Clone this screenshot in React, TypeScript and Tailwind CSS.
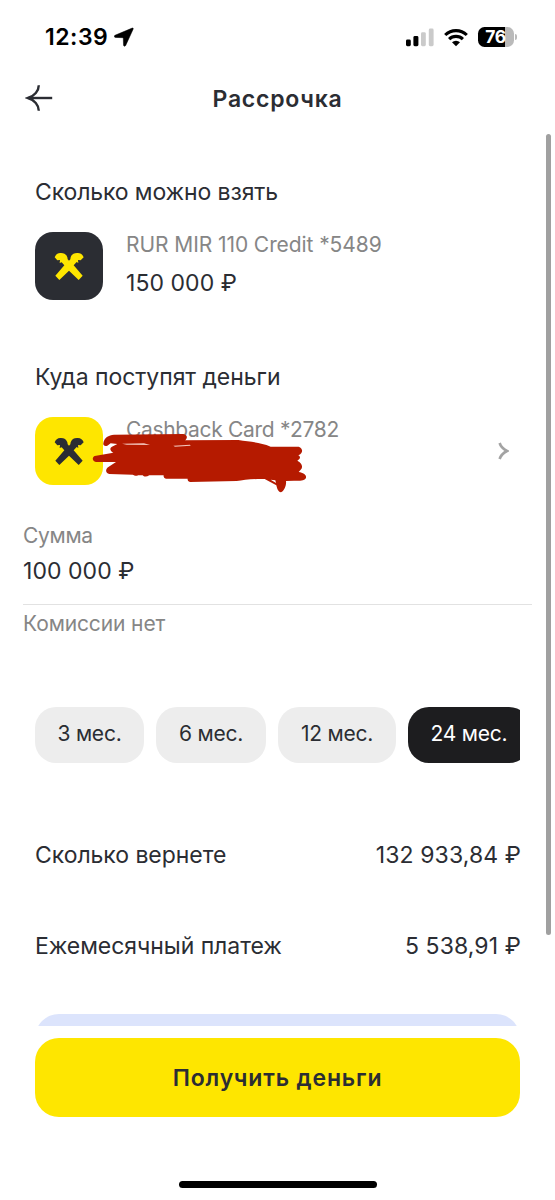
import { useState } from "react";
import clsx from "clsx";

const TERMS = [
  { months: 3, width: "w-[109px]" },
  { months: 6, width: "w-[110px]" },
  { months: 12, width: "w-[118px]" },
  { months: 24, width: "w-[122px]" },
];

function StatusBar() {
  return (
    <div className="flex h-[74px] shrink-0 items-center pl-[45px] pr-[38px] text-black">
      <span className="text-[23px] font-semibold leading-7 tracking-[0.5px]">
        12:39
      </span>
      <svg className="ml-[6px]" width="20" height="20" viewBox="0 0 20 20">
        <path
          d="M18.2 1.100 1 8.300c-1.100.5-.9 2 .3 2.100l7.300.3c.5 0 .7.2.7.7l.2 6.500c.1 1.400 1.600 1.700 2.200.5L19.200 2c.3-.7-.3-1.200-1-.9Z"
          fill="currentColor"
          stroke="currentColor"
          strokeWidth="0.5"
        />
      </svg>
      <div className="ml-auto flex items-center">
        <svg width="28" height="19" viewBox="0 0 28 19">
          <rect x="0" y="11.5" width="4.8" height="6.7" rx="1.4" />
          <rect x="7.4" y="8" width="5" height="10.2" rx="1.4" />
          <rect x="15" y="4.2" width="4.8" height="14" rx="1.4" fill="#cacaca" />
          <rect x="22.8" y="0.5" width="4.8" height="17.7" rx="1.4" fill="#cacaca" />
        </svg>
        <svg className="ml-[10px]" width="24" height="19" viewBox="0 0 24 19">
          <g fill="none" stroke="currentColor" strokeWidth="3.1">
            <path d="M1.2 7a15.4 15.4 0 0 1 21.6 0" />
            <path d="M5.1 11.2a9.8 9.8 0 0 1 13.8 0" />
          </g>
          <path d="M12 18.3 8 14.3a5.7 5.7 0 0 1 8 0Z" fill="currentColor" />
        </svg>
        <div className="ml-[10px] flex h-[20px] w-[36px] items-center justify-center rounded-[6.5px] bg-[linear-gradient(to_right,#000_27px,#bababa_27px)] text-[17.5px] font-bold leading-5 tracking-[-0.4px] text-white">
          76
        </div>
        <div className="ml-[1.5px] h-[6px] w-[2px] rounded-r-full bg-[#bababa]" />
      </div>
    </div>
  );
}

function Header() {
  return (
    <header className="grid h-[49px] shrink-0 grid-cols-[1fr_auto_1fr] items-center px-[25px]">
      <button aria-label="Назад" className="w-[28px] pb-[1px]">
        <svg width="28" height="28" viewBox="0 0 28 28" fill="none" stroke="#2b2d33" strokeWidth="2.4">
          <path d="M27.200 14H3.500" />
          <path d="M13.800 1.300c0 5.500-4.400 10.700-10.800 12.700 6.400 2 10.800 7.200 10.800 12.700" />
        </svg>
      </button>
      <h1 className="text-[23px] font-semibold leading-7 tracking-[0.75px]">
        Рассрочка
      </h1>
    </header>
  );
}

function CardLogo({ dark }: { dark?: boolean }) {
  return (
    <div
      className={clsx(
        "size-[68px] shrink-0 rounded-[18px]",
        dark ? "bg-[#2b2d33] text-[#fee600]" : "bg-[#fee600] text-[#2b2d33]"
      )}
    >
      <svg width="68" height="68" viewBox="15 21 204 204">
        <path
          d="M74 97C77 88 84 83 93 84C103 84 109 88 112 97L113 103L117 107L121 103L122 97C125 88 131 84 141 84C151 83 158 88 161 97L152 106L144 105L145 114L140 111L131 121L158 152L146 165L117 137L88 165L76 152L103 121L95 112L89 114L90 105L82 106Z"
          fill="currentColor"
        />
      </svg>
    </div>
  );
}

function Scribble() {
  return (
    <svg
      className="absolute left-[57px] top-[15px]"
      width="216"
      height="62"
      viewBox="216 216 648 186"
      fill="#b51a00"
    >
      <path d="M250 250C252 233 266 225 282 224L490 222C502 224 504 234 495 241L655 240C690 246 720 246 752 260L836 260C850 265 850 280 835 286C842 290 842 296 832 302C846 308 850 322 842 329L836 336C850 338 860 345 858 353C856 361 840 363 822 362L798 363C800 375 792 395 783 397C773 396 770 380 769 376L734 357C700 356 670 360 650 363L510 366C504 365 502 360 503 356L438 356C432 355 430 350 431 346L388 346C380 351 372 351 368 346L354 346C348 350 342 345 338 344L268 342C257 340 255 329 264 322L288 306L228 306C217 303 215 293 224 288L280 278C270 274 268 264 276 260L292 252L272 250L262 257C254 260 249 256 250 250Z" />
      <path d="M306 251 372 250 390 255 320 254ZM460 257 510 254 512 257 465 260Z" fill="#f3c5bb" />
      <path d="M752 359 766 361 768 369Z" fill="#fff" />
    </svg>
  );
}

function CardRow({
  name,
  amount,
  dark,
}: {
  name: string;
  amount?: string;
  dark?: boolean;
}) {
  return (
    <div className="relative mt-[26px] flex h-[68px]">
      <CardLogo dark={dark} />
      <div className="ml-[23px] flex flex-1 flex-col gap-[12px]">
        <span
          className={clsx(
            "text-[21px] leading-[25px] text-[#868686]",
            dark ? "tracking-[-0.08px]" : "tracking-[-0.32px]"
          )}
        >
          {name}
        </span>
        {amount && (
          <span className="text-[23px] leading-7 tracking-[0.05px]">{amount}</span>
        )}
      </div>
      {!amount && (
        <>
          <Scribble />
          <svg
            className="mr-[11px] self-center"
            width="11"
            height="20"
            viewBox="0 0 11 20"
            fill="none"
            stroke="#a3a3a3"
            strokeWidth="2.6"
          >
            <path d="M1.600 2C2.700 5.600 5.200 8 9 10C5.200 12 2.700 14.400 1.600 18" />
          </svg>
        </>
      )}
    </div>
  );
}

function SummaryRow({ label, value }: { label: string; value: string }) {
  return (
    <div className="flex justify-between text-[23px] leading-7">
      <span className="tracking-[-0.05px]">{label}</span>
      <span className="-mr-px tracking-[0.1px]">{value}</span>
    </div>
  );
}

export default function App() {
  const [term, setTerm] = useState(24);

  return (
    <div className="relative flex h-[1200px] w-[555px] flex-col overflow-hidden bg-white font-['Inter','Liberation_Sans',sans-serif] text-[#2b2d33]">
      <StatusBar />
      <Header />

      <main className="h-[903px] shrink-0 overflow-hidden px-[35px] pt-[55px]">
        <section>
          <h2 className="text-[23px] leading-7 tracking-[-0.12px]">
            Сколько можно взять
          </h2>
          <CardRow name="RUR MIR 110 Credit *5489" amount="150 000 ₽" dark />
        </section>

        <section className="mt-[63px]">
          <h2 className="text-[23px] leading-7 tracking-[-0.05px]">
            Куда поступят деньги
          </h2>
          <CardRow name="Cashback Card *2782" />
        </section>

        <section className="-ml-[12px] -mr-[12px] mt-[38px] flex flex-col">
          <span className="text-[21px] leading-[25px] tracking-[-0.3px] text-[#868686]">
            Сумма
          </span>
          <span className="mt-[9px] border-b border-[#e2e2e2] pb-[19px] text-[23px] leading-7 tracking-[0.05px]">
            100 000 ₽
          </span>
          <span className="mt-[6px] text-[21px] leading-[25px] tracking-[-0.12px] text-[#868686]">
            Комиссии нет
          </span>
        </section>

        <div className="mt-[71px] flex gap-[12px] overflow-hidden">
          {TERMS.map(({ months, width }) => (
            <button
              key={months}
              onClick={() => setTerm(months)}
              className={clsx(
                "h-[56px] shrink-0 rounded-[21px] pb-[3px] text-[21px] leading-[25px] tracking-[-0.22px]",
                width,
                term === months ? "bg-[#1d1d1f] text-white" : "bg-[#ededed]"
              )}
            >
              {months} мес.
            </button>
          ))}
        </div>

        <div className="mt-[78px] flex flex-col gap-[63px]">
          <SummaryRow label="Сколько вернете" value="132 933,84 ₽" />
          <SummaryRow label="Ежемесячный платеж" value="5 538,91 ₽" />
        </div>

        <div className="mt-[54px] h-[80px] rounded-[24px] bg-[#dce4fc]" />
      </main>

      <footer className="flex flex-col items-center px-[35px] pt-[12px]">
        <button className="h-[79px] w-full rounded-[24px] bg-[#fee600] text-[23px] font-semibold leading-7 tracking-[0.85px]">
          Получить деньги
        </button>
        <div className="mt-[64px] h-[7px] w-[198px] rounded-full bg-black" />
      </footer>

      <div className="absolute left-[546px] top-[134px] h-[801px] w-[5px] rounded-full bg-[#a0a0a0]" />
    </div>
  );
}
